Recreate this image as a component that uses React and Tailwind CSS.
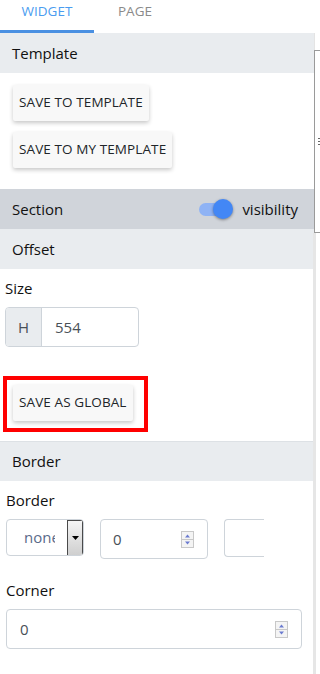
import React from "react";

const font = { fontFamily: '"Open Sans", "Noto Sans", sans-serif' };

function Spinner() {
  return (
    <svg width="13" height="17" viewBox="0 0 13 17">
      <rect x="0.5" y="0.5" width="12" height="16" fill="#f4f4f4" stroke="#c8c8c8" />
      <line x1="1" y1="8.5" x2="12" y2="8.5" stroke="#c8c8c8" />
      <path d="M4 6.5 L6.5 3.5 L9 6.5 Z" fill="#6b7bd0" />
      <path d="M4 10.5 L6.5 13.5 L9 10.5 Z" fill="#6b7bd0" />
    </svg>
  );
}

function Btn({ children }) {
  return (
    <button className="h-[36px] px-[6px] bg-[#f8f8f8] text-[13.5px] text-[#212529] tracking-[0.1px] shadow-[0_2px_4px_rgba(0,0,0,0.22)] rounded-[2px] leading-none">
      {children}
    </button>
  );
}

function Header({ children, dark, right, top }) {
  return (
    <div
      className={`h-[40px] flex items-center justify-between pl-[12px] pr-[16px] text-[15px] text-[#111] ${
        dark ? "bg-[#d0d4da]" : "bg-[#e9ecef]"
      } ${top ? "border-t border-[#dde1e5]" : ""}`}
    >
      <span>{children}</span>
      {right}
    </div>
  );
}

export default function App() {
  return (
    <div className="w-[320px] h-[674px] bg-white flex overflow-hidden" style={font}>
      <div className="w-[314px] flex flex-col">
        {/* tabs */}
        <div className="h-[33px] flex text-[13.5px]">
          <div className="w-[94px] border-b-[3px] border-[#4a90e2] flex justify-center pt-[1px] text-[#4a9cf0]">
            WIDGET
          </div>
          <div className="w-[82px] flex justify-center pt-[1px] text-[#8a8a8a]">PAGE</div>
        </div>

        <Header>Template</Header>
        <div className="flex flex-col items-start pl-[13px] pt-[12px] pb-[21px] gap-[11px]">
          <Btn>SAVE TO TEMPLATE</Btn>
          <Btn>SAVE TO MY TEMPLATE</Btn>
        </div>

        <Header
          dark
          right={
            <div className="flex items-center gap-[9px]">
              <div className="relative w-[34px] h-[20px] flex items-center">
                <div className="w-[32px] h-[13px] rounded-full bg-[#8fb3f5]" />
                <div className="absolute right-0 top-0 w-[20px] h-[20px] rounded-full bg-[#4387f5] shadow-[0_1px_3px_rgba(0,0,0,0.4)]" />
              </div>
              <span>visibility</span>
            </div>
          }
        >
          Section
        </Header>
        <Header>Offset</Header>

        <div className="flex flex-col items-start pl-[5px] pt-[9px]">
          <div className="text-[15px] text-[#111] leading-[20px]">Size</div>
          <div className="mt-[9px] w-[134px] h-[40px] flex border border-[#ced4da] rounded-[4px] overflow-hidden">
            <div className="w-[36px] bg-[#e9ecef] border-r border-[#ced4da] flex items-center justify-center text-[15px] text-[#495057]">
              H
            </div>
            <div className="flex-1 flex items-center pl-[13px] text-[15px] text-[#495057]">554</div>
          </div>
          <div className="mt-[29px] -ml-[2px] w-[145px] h-[56px] border-[4px] border-[#ff0000] pl-[6px] pt-[5px]">
            <Btn>SAVE AS GLOBAL</Btn>
          </div>
        </div>

        <div className="mt-[9px]">
          <Header top>Border</Header>
        </div>

        <div className="flex flex-col pl-[6px] pt-[9px]">
          <div className="text-[15px] text-[#111] leading-[20px]">Border</div>
          <div className="mt-[9px] flex items-start">
            <div className="w-[78px] h-[37px] border border-[#ced4da] rounded-[4px] flex items-center overflow-hidden">
              <div className="w-[49px] pl-[17px] text-[15px] text-[#5a6a8a] overflow-hidden whitespace-nowrap">none</div>
              <div className="ml-[12px] w-[16px] h-[36px] border border-[#4a4a4a] bg-gradient-to-b from-[#f5f5f5] to-[#cfcfcf] flex items-center justify-center">
                <svg width="7" height="4" viewBox="0 0 7 4">
                  <path d="M0 0 L7 0 L3.5 4 Z" fill="#000" />
                </svg>
              </div>
            </div>
            <div className="ml-[16px] w-[108px] h-[40px] border border-[#ced4da] rounded-[4px] flex items-center justify-between pl-[12px] pr-[13px] text-[15px] text-[#495057]">
              <span>0</span>
              <Spinner />
            </div>
            <div className="ml-[16px] w-[40px] h-[38px] border border-[#ced4da] border-r-0 rounded-l-[4px]" />
          </div>
          <div className="mt-[21px] text-[15px] text-[#111] leading-[20px]">Corner</div>
          <div className="mt-[9px] w-[296px] h-[40px] border border-[#ced4da] rounded-[4px] flex items-center justify-between pl-[13px] pr-[13px] text-[15px] text-[#495057]">
            <span>0</span>
            <Spinner />
          </div>
        </div>
      </div>

      {/* scrollbar */}
      <div className="w-[6px] flex flex-col">
        <div className="h-[33px]" />
        <div className="h-[17px] border-l border-[#e4e4e4]" />
        <div className="h-[183px] border-l border-t border-b border-[#9a9a9a] bg-white flex items-center justify-end">
          <div className="w-[2px] h-[7px] border-y border-[#666] flex items-center">
            <div className="w-[2px] h-px bg-[#666]" />
          </div>
        </div>
        <div className="flex-1 border-l-[3px] border-[#e6e6e6] ml-[-1px]" />
      </div>
    </div>
  );
}
